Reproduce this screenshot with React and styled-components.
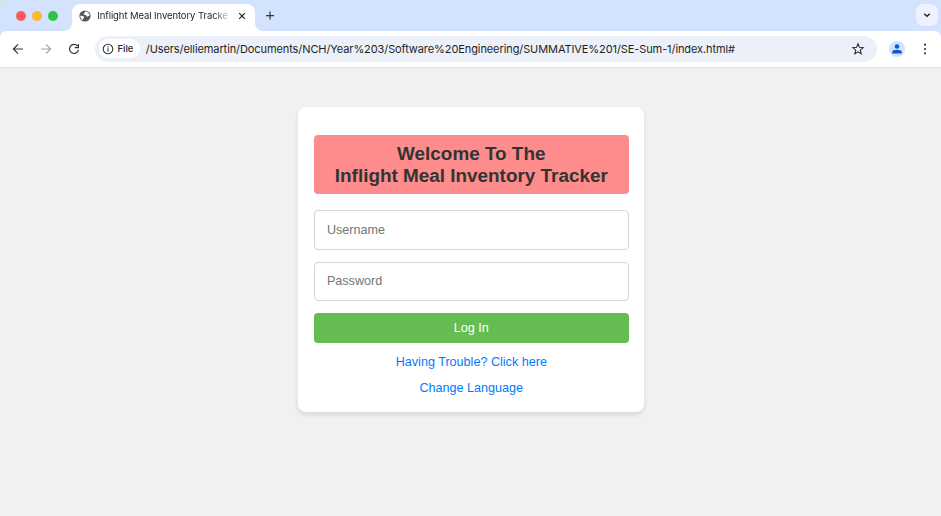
import React from "react";
import styled, { createGlobalStyle } from "styled-components";

const GlobalStyle = createGlobalStyle`
  * { box-sizing: border-box; }
  body { margin: 0; background: #f1f1f1; overflow: hidden; }
`;

const Window = styled.div`
  width: 941px;
  height: 516px;
  display: flex;
  flex-direction: column;
  background: #f1f1f1;
  font-family: Inter, sans-serif;
  color: #1f1f1f;
`;

const TabStrip = styled.header`
  height: 31px;
  flex: none;
  display: flex;
  align-items: center;
  padding: 0 3px 0 16.3px;
  background: radial-gradient(circle at 6px 6px, #d3e2fd 6.5px, #f3dfa0 7.5px) 0 0 / 6px 6px no-repeat, #d3e2fd;
`;

const TrafficLights = styled.div`
  display: flex;
  gap: 5.8px;
  width: 55.7px;
`;

const Light = styled.span`
  width: 10px;
  height: 10px;
  border-radius: 50%;
  background: ${(p) => p.$color};
`;

const Tab = styled.div`
  position: relative;
  width: 183px;
  height: 27px;
  align-self: flex-end;
  display: flex;
  align-items: center;
  padding: 0 7px 4px 7px;
  border-radius: 8px 8px 0 0;
  background: #fff;

  &::before,
  &::after {
    content: "";
    position: absolute;
    bottom: 0;
    width: 8px;
    height: 8px;
  }
  &::before {
    left: -8px;
    background: radial-gradient(circle at 0 0, transparent 7.5px, #fff 8.5px);
  }
  &::after {
    right: -8px;
    background: radial-gradient(circle at 100% 0, transparent 7.5px, #fff 8.5px);
  }
`;

const TabTitle = styled.span`
  width: 131px;
  margin-left: 6.3px;
  overflow: hidden;
  white-space: nowrap;
  font-size: 9.5px;
  line-height: 14px;
  letter-spacing: -0.09px;
  mask-image: linear-gradient(to right, #000 116px, transparent 135px);
`;

const Icon = styled.svg`
  flex: none;
  display: block;
  width: ${(p) => p.$size}px;
  height: ${(p) => p.$size}px;
  margin-left: ${(p) => p.$left || 0}px;
  color: ${(p) => p.$color || "#333538"};
  fill: none;
  stroke: currentColor;
  stroke-width: ${(p) => p.$stroke || 1.2};
`;

const TabSearch = styled.div`
  width: 22px;
  height: 22px;
  margin: 0 0 1px auto;
  display: grid;
  place-items: center;
  border-radius: 7px;
  background: #edf2fd;
`;

const ToolbarBackdrop = styled.div`
  flex: none;
  background: #d3e2fd;
`;

const Toolbar = styled.nav`
  height: 37px;
  display: flex;
  align-items: center;
  padding: 0 7px 1px 11px;
  background: #fff;
  border-bottom: 1px solid #dfe0e1;
  border-radius: 6px 6px 0 0;
`;

const AddressBar = styled.div`
  width: 782px;
  height: 26px;
  margin-left: 15px;
  display: flex;
  align-items: center;
  padding: 0 12px 0 4px;
  border-radius: 13px;
  background: #ecf0f9;
`;

const FileChip = styled.div`
  width: 41px;
  height: 19px;
  display: flex;
  align-items: center;
  padding-left: 3px;
  gap: 3.5px;
  border-radius: 10px;
  background: #fff;
  font-size: 9.5px;
  font-weight: 500;
`;

const Url = styled.span`
  margin-left: 5.8px;
  font-size: 11px;
  line-height: 16px;
  white-space: nowrap;
  letter-spacing: -0.092px;
`;

const StarSlot = styled.span`
  margin-left: auto;
`;

const Avatar = styled.div`
  width: 16px;
  height: 16px;
  margin-left: 12px;
  display: grid;
  place-items: center;
  border-radius: 50%;
  background: #d3e2fd;
`;

const Page = styled.main`
  flex: 1;
  display: flex;
  justify-content: center;
  align-items: flex-start;
  padding-top: 39px;
  font-family: "Liberation Sans", Arial, sans-serif;
`;

const Card = styled.form`
  width: 346px;
  height: 304.5px;
  margin-left: 1.6px;
  display: flex;
  flex-direction: column;
  padding: 28px 15.6px 0;
  border-radius: 8px;
  background: #fff;
  box-shadow: 0 3px 5px rgba(0, 0, 0, 0.1);
`;

const Heading = styled.h1`
  height: 59px;
  margin: 0 0 16px;
  padding-top: 8px;
  border-radius: 4px;
  background: #ff8c8c;
  color: #333;
  font-size: 18.9px;
  line-height: 21.7px;
  text-align: center;
`;

const Field = styled.input`
  display: block;
  width: 100%;
  height: 39.5px;
  margin: 0 0 12px;
  padding: 0 12px;
  border: 1px solid #d4d4d4;
  border-radius: 4px;
  background: #fff;
  font: 12.6px "Liberation Sans", Arial, sans-serif;
  outline: none;
  &::placeholder { color: #757575; opacity: 1; }
`;

const LoginButton = styled.button`
  height: 30px;
  padding: 0;
  border: 0;
  border-radius: 4px;
  background: #65bd51;
  color: #fff;
  font: 12.6px "Liberation Sans", Arial, sans-serif;
`;

const Links = styled.div`
  display: flex;
  flex-direction: column;
  align-items: center;
  gap: 12px;
  margin-top: 12px;
`;

const Link = styled.a`
  color: #007bff;
  font-size: 12.6px;
  line-height: 14.4px;
  text-decoration: none;
`;

export default function App() {
  return (
    <>
      <GlobalStyle />
      <Window>
        <TabStrip>
          <TrafficLights>
            <Light $color="#ff5b54" />
            <Light $color="#fdb92c" />
            <Light $color="#27c83f" />
          </TrafficLights>
          <Tab>
            <Icon viewBox="0 0 12 12" $size={12} $color="#53575e">
              <circle cx="6" cy="6" r="5.6" fill="currentColor" stroke="none" />
              <path
                d="M6.8 1.3 C5.2 2.1 6 3 5 3.5 C4 4 4.8 5 6.4 5 C7.7 5.1 6.8 6.5 8 6.6 C9 6.7 9 5.8 10.6 5.8 C10.7 4 9 1.8 6.8 1.3Z M1.3 5.7 C2.8 5.7 4.6 5.7 5 7 C5.4 8.1 4 8.1 4 9.2 L4 10.1 C2.2 9.3 1.2 7.6 1.3 5.7Z"
                fill="#fff"
                stroke="none"
              />
            </Icon>
            <TabTitle>Inflight Meal Inventory Tracke</TabTitle>
            <Icon viewBox="0 0 8 8" $size={8} $left={10} $color="#1f1f1f">
              <path d="M1.2 1.2 6.8 6.8M6.8 1.2 1.2 6.8" />
            </Icon>
          </Tab>
          <Icon viewBox="0 0 10 10" $size={10} $left={10.5}>
            <path d="M5 .6v8M1 4.6h8" />
          </Icon>
          <TabSearch>
            <Icon viewBox="0 0 8 8" $size={8} $stroke={1.4} $color="#1f1f1f">
              <path d="m1.2 2.7 2.8 2.6 2.8-2.6" />
            </Icon>
          </TabSearch>
        </TabStrip>
        <ToolbarBackdrop>
          <Toolbar>
            <Icon viewBox="0 0 12 12" $size={12} $left={0.7}>
              <path d="M11 6H1.8M6 1.4 1.4 6 6 10.6" />
            </Icon>
            <Icon viewBox="0 0 12 12" $size={12} $left={16} $color="#a1a2a4">
              <path d="M1 6H10.2M6 1.4 10.6 6 6 10.6" />
            </Icon>
            <Icon viewBox="0 0 12 12" $size={12} $left={16.3}>
              <path d="M9.5 3.1A4.5 4.5 0 1 0 10.4 6.8M10.4 1v3.7H6.7" />
            </Icon>
            <AddressBar>
              <FileChip>
                <Icon viewBox="0 0 12 12" $size={12} $stroke={1.1}>
                  <circle cx="6" cy="6" r="4.8" />
                  <path d="M6 5.3v3.2M6 3.3v1.2" />
                </Icon>
                File
              </FileChip>
              <Url>
                /Users/elliemartin/Documents/NCH/Year%203/Software%20Engineering/SUMMATIVE%201/SE-Sum-1/index.html#
              </Url>
              <StarSlot>
                <Icon viewBox="0 0 14 14" $size={14} $stroke={1.1}>
                  <path d="m7 1.8 1.4 3.5 3.8.3-2.9 2.5.9 3.7L7 9.8l-3.2 2 .9-3.7-2.9-2.5 3.8-.3Z" />
                </Icon>
              </StarSlot>
            </AddressBar>
            <Avatar>
              <Icon viewBox="0 0 10 10" $size={10} $color="#0b57d0">
                <circle cx="5" cy="2.5" r="2.3" fill="currentColor" stroke="none" />
                <path d="M0.2 9.5V8.2C.2 6.6 2.6 5.8 5 5.8s4.8.8 4.8 2.4v1.3Z" fill="currentColor" stroke="none" />
              </Icon>
            </Avatar>
            <Icon viewBox="0 0 12 12" $size={12} $left={14.5}>
              <g fill="currentColor" stroke="none">
                <circle cx="6" cy="1.7" r="1.1" />
                <circle cx="6" cy="6" r="1.1" />
                <circle cx="6" cy="10.3" r="1.1" />
              </g>
            </Icon>
          </Toolbar>
        </ToolbarBackdrop>
        <Page>
          <Card>
            <Heading>
              Welcome To The
              <br />
              Inflight Meal Inventory Tracker
            </Heading>
            <Field placeholder="Username" />
            <Field type="password" placeholder="Password" />
            <LoginButton type="button">Log In</LoginButton>
            <Links>
              <Link href="#">Having Trouble? Click here</Link>
              <Link href="#">Change Language</Link>
            </Links>
          </Card>
        </Page>
      </Window>
    </>
  );
}
